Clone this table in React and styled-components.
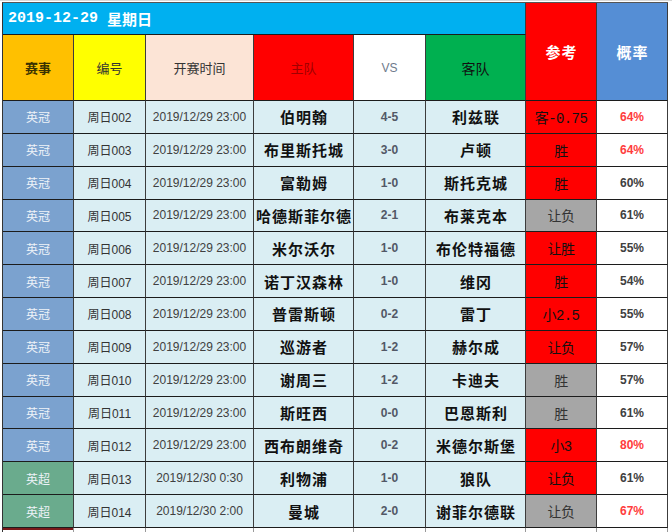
import React from "react";
import styled, { createGlobalStyle } from "styled-components";

const Global = createGlobalStyle`
  html, body { margin: 0; padding: 0; background: #ffffff; }
  body { font-family: "Liberation Sans", Arial, "Noto Sans CJK SC", sans-serif; }
`;

const COLS = "71px 72px 108px 100px 72px 100px 71px 71px";

const Page = styled.div`
  width: 672px;
  height: 532px;
  overflow: hidden;
  box-sizing: border-box;
  padding: 1px 0 0 2px;
  border-top: 1px solid #d9d9d9;
`;

const Sheet = styled.div`
  display: grid;
  grid-template-columns: ${COLS};
  grid-template-rows: 32px 66px repeat(13, 32.85px) 12px;
  border-left: 1px solid #333;
  border-top: 1px solid #555;
  width: max-content;
`;

const Cell = styled.div`
  box-sizing: border-box;
  display: flex;
  align-items: center;
  justify-content: center;
  border-right: 1px solid #3c3c3c;
  border-bottom: 1px solid #1c1c1c;
  background: ${(p) => p.$bg || "#daeef3"};
  color: ${(p) => p.$color || "#333"};
  font-size: 12px;
  white-space: nowrap;
  overflow: hidden;
`;

const Title = styled(Cell)`
  grid-row: 1;
  grid-column: 1 / 7;
  justify-content: flex-start;
  padding-left: 5px;
  background: #00b0f0;
  color: #ffffff;
  font-family: "Liberation Mono", "Noto Sans CJK SC", monospace;
  font-size: 15px;
  font-weight: 700;
  gap: 9px;
`;

const SideHead = styled(Cell)`
  grid-row: 1 / 3;
  grid-column: ${(p) => p.$col};
  color: #ffffff;
  font-family: "Noto Sans CJK SC", sans-serif;
  font-size: 15px;
  font-weight: 700;
  letter-spacing: 1px;
  padding-left: 1px;
`;

const HeadCell = styled(Cell)`
  grid-row: 2;
  font-family: ${(p) => (p.$latin ? '"Liberation Sans", Arial, sans-serif' : '"Noto Sans CJK SC", sans-serif')};
  font-size: ${(p) => p.$size || 13}px;
  font-weight: ${(p) => p.$weight || 400};
`;

const LeagueCell = styled(Cell)`
  color: #eef3f8;
  font-family: "Noto Sans CJK SC", sans-serif;
  font-size: 12px;
`;

const CodeCell = styled(Cell)`
  color: #333;
  font-size: 12px;
`;

const TimeCell = styled(Cell)`
  color: #404040;
  font-size: 12px;
`;

const TeamCell = styled(Cell)`
  color: #111;
  font-family: "Noto Sans CJK SC", sans-serif;
  font-size: 15px;
  font-weight: 700;
  letter-spacing: 1px;
  padding-left: 1px;
`;

const ScoreCell = styled(Cell)`
  color: #525866;
  font-size: 12px;
  font-weight: 700;
`;

const RefCell = styled(Cell)`
  background: ${(p) => (p.$hit ? "#ff0000" : "#a6a6a6")};
  color: ${(p) => (p.$hit ? "#111" : "#333")};
  font-family: "Liberation Mono", "Noto Sans CJK SC", monospace;
  font-size: 14px;
  letter-spacing: -0.6px;
`;

const ProbCell = styled(Cell)`
  background: #ffffff;
  color: ${(p) => (p.$hot ? "#ff3c3c" : "#404040")};
  font-size: 12px;
  font-weight: 700;
`;

const TailCell = styled.div`
  box-sizing: border-box;
  background: #ffffff;
  border-right: 1px solid #9a9a9a;
  box-shadow: ${(p) => (p.$first ? "inset 0 2px 0 #7a1a1a" : "none")};
`;

const rows = [
  ["英冠", "周日002", "2019/12/29 23:00", "伯明翰", "4-5", "利兹联", "客-0.75", true, "64%", true],
  ["英冠", "周日003", "2019/12/29 23:00", "布里斯托城", "3-0", "卢顿", "胜", true, "64%", true],
  ["英冠", "周日004", "2019/12/29 23:00", "富勒姆", "1-0", "斯托克城", "胜", true, "60%", false],
  ["英冠", "周日005", "2019/12/29 23:00", "哈德斯菲尔德", "2-1", "布莱克本", "让负", false, "61%", false],
  ["英冠", "周日006", "2019/12/29 23:00", "米尔沃尔", "1-0", "布伦特福德", "让胜", true, "55%", false],
  ["英冠", "周日007", "2019/12/29 23:00", "诺丁汉森林", "1-0", "维冈", "胜", true, "54%", false],
  ["英冠", "周日008", "2019/12/29 23:00", "普雷斯顿", "0-2", "雷丁", "小2.5", true, "55%", false],
  ["英冠", "周日009", "2019/12/29 23:00", "巡游者", "1-2", "赫尔成", "让负", true, "57%", false],
  ["英冠", "周日010", "2019/12/29 23:00", "谢周三", "1-2", "卡迪夫", "胜", false, "57%", false],
  ["英冠", "周日011", "2019/12/29 23:00", "斯旺西", "0-0", "巴恩斯利", "胜", false, "61%", false],
  ["英冠", "周日012", "2019/12/29 23:00", "西布朗维奇", "0-2", "米德尔斯堡", "小3", true, "80%", true],
  ["英超", "周日013", "2019/12/30 0:30", "利物浦", "1-0", "狼队", "让负", true, "61%", false],
  ["英超", "周日014", "2019/12/30 2:00", "曼城", "2-0", "谢菲尔德联", "让负", false, "67%", true],
];

const leagueColor = { 英冠: "#7ba2cf", 英超: "#6aab8d" };

export default function App() {
  return (
    <>
      <Global />
      <Page>
        <Sheet>
          <Title>
            <span>2019-12-29</span>
            <span>星期日</span>
          </Title>
          <SideHead $col={7} $bg="#ff0000">参考</SideHead>
          <SideHead $col={8} $bg="#558ed5">概率</SideHead>

          <HeadCell $bg="#ffc000" $color="#3a3200" $weight={700}>赛事</HeadCell>
          <HeadCell $bg="#ffff00" $color="#333">编号</HeadCell>
          <HeadCell $bg="#fce4d6" $color="#333">开赛时间</HeadCell>
          <HeadCell $bg="#ff0000" $color="#a00000">主队</HeadCell>
          <HeadCell $bg="#ffffff" $color="#6f7b8c" $latin $size={12}>VS</HeadCell>
          <HeadCell $bg="#00b050" $color="#111" $size={14}>客队</HeadCell>

          {rows.map((r) => (
            <React.Fragment key={r[1]}>
              <LeagueCell $bg={leagueColor[r[0]]}>{r[0]}</LeagueCell>
              <CodeCell>{r[1]}</CodeCell>
              <TimeCell>{r[2]}</TimeCell>
              <TeamCell>{r[3]}</TeamCell>
              <ScoreCell>{r[4]}</ScoreCell>
              <TeamCell>{r[5]}</TeamCell>
              <RefCell $hit={r[7]}>{r[6]}</RefCell>
              <ProbCell $hot={r[9]}>{r[8]}</ProbCell>
            </React.Fragment>
          ))}

          {Array.from({ length: 8 }).map((_, i) => (
            <TailCell key={i} $first={i === 0} />
          ))}
        </Sheet>
      </Page>
    </>
  );
}
